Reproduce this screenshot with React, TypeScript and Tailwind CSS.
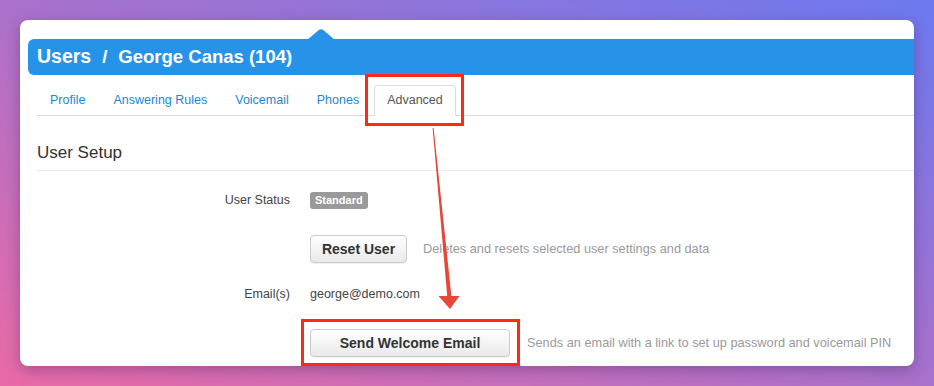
const tabs = ["Profile", "Answering Rules", "Voicemail", "Phones", "Advanced"];

const App = () => {
  return (
    <div
      className="relative h-[386px] w-full overflow-hidden bg-[linear-gradient(to_top_right,#e96aa6,#a971cb_50%,#6c79f0)] p-[20px] text-[#333]"
      style={{ fontFamily: '"Liberation Sans", Arial, sans-serif' }}
    >
      {/* Card */}
      <div className="h-[346px] w-[894px] overflow-hidden rounded-[8px] bg-white pl-[8px] pt-[19px] shadow-[0_4px_14px_rgba(60,30,90,0.35)]">
        {/* Title bar */}
        <div className="relative flex h-[36px] items-center rounded-l-[6px] bg-[#2793e8] pl-[9px] text-[18.5px] font-bold text-white">
          <svg className="absolute -top-[10px] left-[279px]" width="28" height="11" viewBox="0 0 28 11">
            <path d="M0 11 L11.5 1.2 Q14 -0.6 16.5 1.2 L28 11 Z" fill="#2793e8" />
          </svg>
          <span className="text-[19.5px]">Users</span>
          <span className="mx-[11px]">/</span>
          <span>George Canas (104)</span>
        </div>

        <div className="pl-[9px]">
          {/* Tabs */}
          <div className="mt-[10px] flex h-[31px] gap-[2px] border-b border-[#dcdcdc] text-[12.5px]">
            {tabs.map((t) =>
              t === "Advanced" ? (
                <div
                  key={t}
                  className="-mb-px flex h-[31px] items-center rounded-t-[4px] border border-b-white border-[#dcdcdc] bg-white px-[12px] text-[#555]"
                >
                  {t}
                </div>
              ) : (
                <div key={t} className="flex items-center px-[13px] text-[#1d87d2]">
                  {t}
                </div>
              )
            )}
          </div>

          {/* Section header */}
          <div className="border-b border-[#ececec] pb-[7px] pt-[27px] text-[17px] leading-[20px] text-[#333]">
            User Setup
          </div>

          {/* Rows */}
          <div className="text-[12.5px]">
            <div className="mt-[18px] flex h-[22px] items-center">
              <div className="w-[253px] text-right text-[#444]">User Status</div>
              <div className="ml-[20px] rounded-[3px] bg-[#9a9a9a] px-[5px] text-[11px] font-bold leading-[17px] text-white">
                Standard
              </div>
            </div>

            <div className="mt-[24px] flex h-[28px] items-center">
              <div className="w-[253px]" />
              <button className="ml-[20px] h-[28px] w-[97px] rounded-[4px] border border-[#cacaca] bg-[linear-gradient(#ffffff,#e9e9e9)] text-[14px] font-bold text-[#333] shadow-[0_1px_1px_rgba(0,0,0,0.06)]">
                Reset User
              </button>
              <div className="ml-[16px] text-[12.75px] text-[#9a9a9a]">Deletes and resets selected user settings and data</div>
            </div>

            <div className="mt-[21px] flex h-[20px] items-center">
              <div className="w-[253px] text-right text-[#444]">Email(s)</div>
              <div className="ml-[20px] text-[#444]">george@demo.com</div>
            </div>

            <div className="mt-[25px] flex h-[28px] items-center">
              <div className="w-[253px]" />
              <button className="ml-[20px] h-[28px] w-[200px] rounded-[4px] border border-[#cacaca] bg-[linear-gradient(#ffffff,#e9e9e9)] text-[14px] font-bold text-[#333] shadow-[0_1px_1px_rgba(0,0,0,0.06)]">
                Send Welcome Email
              </button>
              <div className="ml-[17px] text-[12.75px] text-[#9a9a9a]">Sends an email with a link to set up password and voicemail PIN</div>
            </div>
          </div>
        </div>
      </div>

      {/* Annotations */}
      <div className="absolute left-[365px] top-[74px] h-[52px] w-[99px] border-[3px] border-[#ff2a14]" />
      <div className="absolute left-[301px] top-[319px] h-[47px] w-[219px] border-[3px] border-[#ff2a14]" />
      <svg className="pointer-events-none absolute left-0 top-0" width="934" height="386" viewBox="0 0 934 386">
        <polygon points="432.6,128 433.6,128 451.6,298 447.4,298" fill="#e6473a" />
        <polygon points="438.5,296 459.5,296 450,309" fill="#e6473a" />
      </svg>
    </div>
  );
};

export default App;
